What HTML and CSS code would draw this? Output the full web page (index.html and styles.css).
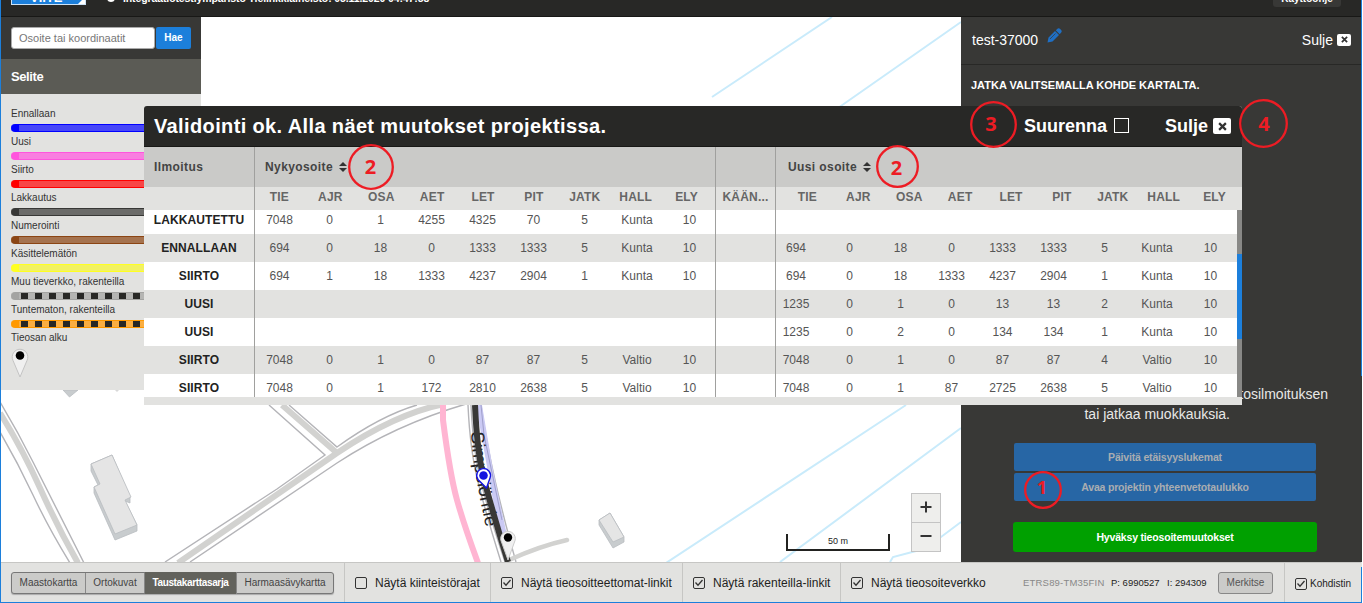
FILE: index.html
```
<!DOCTYPE html>
<html lang="fi">
<head>
<meta charset="utf-8">
<title>Viite</title>
<link rel="stylesheet" href="styles.css">
</head>
<body>
<div class="app">
  <header class="topbar">
    <div class="logo">VIITE<i class="fold"></i></div>
    <span class="dot"></span>
    <span class="env">Integraatiotestiympäristö Tielinkkiaineisto: 05.11.2020 04:47:58</span>
    <span class="guide">Käyttöohje</span>
  </header>

  <main class="main">
    <svg class="map" viewBox="1 17 1360 545" width="1360" height="545" fill="none">
      <g stroke="#c9ebfb" stroke-width="2">
        <path d="M712 97L832 17M818 122L961 22M666 563L906 405M780 562L961 428M890 562L893 557L916 551L941 537L961 522"/>
      </g>
      <g stroke="#b4b4b8" stroke-width="1.4">
        <path d="M0 432Q18 463 33 495T70 563M0 402Q18 432 33 462T84 563"/>
        <path d="M269 405L325 455L277 489L165 562M289 405L337 447Q380 416 417 405M190 562L337 463Q395 425 466 404"/>
        <path d="M468 405Q470 450 478 482T501 562M471 405Q473 450 481 482T505 562M481 405Q490 470 516 562"/>
      </g>
      <g stroke="#d2d2d0" stroke-width="6">
        <path d="M0 413Q22 448 40 488T78 563M178 563L337 453Q395 414 444 404M282 405L337 453"/>
        <path d="M509 560Q540 546 567 540" stroke-width="4.5" stroke-linecap="round"/>
      </g>
      <path d="M443 405L443 420Q450 475 457 500T478 563" stroke="#ffb5d2" stroke-width="6"/>
      <path d="M476 405H482L493 470L508 540L500 540Z" fill="#cbcaf4"/>
      <path d="M481 405L484 435L502 520" stroke="#a0a0cc"/>
      <path id="street" d="M471 432C473 465 479 497 489 540"/>
      <text class="street-name"><textPath href="#street">Simpsiöntie</textPath></text>
      <path d="M475 405Q477 450 483 475T508 562" stroke="#383836" stroke-width="6"/>
      <g stroke="#b9bdc0" stroke-width=".8">
        <path d="M91 464V471L98 485L94 487V493L115 540L137 531V525L125 501L130 503V497L112 455Z" fill="#c8ccce"/>
        <path d="M91 464L112 455L131 497L125 500L137 525L115 534L94 487L100 484Z" fill="#e5e5e5"/>
        <path d="M599 520V525L613 548L624 542V537L610 513Z" fill="#c8ccce"/>
        <path d="M599 520L610 513L624 537L613 542Z" fill="#e5e5e5"/>
        <path d="M63 390L69.500 397L78 390Z" fill="#c8ccce"/>
      </g>
      <path d="M115 390H119L117 392Z" fill="#d8d8d8"/>
      <path d="M486.500 488L478 479.500A6.900 6.900 0 1 1 490 478Z" fill="#fff" stroke="#1414e0" stroke-width="1.4"/>
      <circle cx="483.500" cy="475.500" r="4.300" fill="#1414e0"/>
      <path d="M508 560L501.500 542A7.300 7.300 0 1 1 514.500 542Z" fill="#f0f0f0" stroke="#ccc"/>
      <circle cx="508" cy="537.500" r="4.200" fill="#000"/>
      <path d="M787 534V550H889V534" stroke="#222220" stroke-width="2"/>
      <text class="scale" x="838" y="544">50 m</text>
    </svg>

    <aside class="sidebar">
      <div class="search"><span class="field">Osoite tai koordinaatit</span><span class="go">Hae</span></div>
      <h2 class="legend-title">Selite</h2>
      <div class="legend">
        <p>Ennallaan</p><div class="line blue"></div>
        <p>Uusi</p><div class="line pink"></div>
        <p>Siirto</p><div class="line red"></div>
        <p>Lakkautus</p><div class="line grey"></div>
        <p>Numerointi</p><div class="line brown"></div>
        <p>Käsittelemätön</p><div class="line yellow"></div>
        <p>Muu tieverkko, rakenteilla</p><div class="line silver dashed"></div>
        <p>Tuntematon, rakenteilla</p><div class="line orange dashed"></div>
        <p>Tieosan alku</p>
        <svg class="pin" width="18" height="32" viewBox="0 0 18 32"><path d="M9 29L2 12.500A7.800 7.800 0 1 1 16 12.500Z" fill="#f0f0f0" stroke="#c4c4c4"/><circle cx="9" cy="7.500" r="4.300"/></svg>
      </div>
    </aside>

    <div class="zoomer">
      <span><svg width="12" height="12" viewBox="0 0 12 12"><path d="M6 .5V11.500M.5 6H11.500" stroke="#333" stroke-width="2"/></svg></span>
      <span><svg width="12" height="12" viewBox="0 0 12 12"><path d="M.5 6H11.500" stroke="#333" stroke-width="2"/></svg></span>
    </div>

    <aside class="panel">
      <div class="project">
        <span class="name">test-37000</span>
        <svg class="pencil" width="15" height="15" viewBox="0 0 15 15"><path d="M.5 14.500L1.500 9.500L8 3L12 7L5.500 13.500ZM8.800 2.300L10.800.5Q12 -.3 13.200 1L13.900 1.700Q15.200 3 14.400 4.200L12.700 6.200Z" fill="#1f6fc4"/><path d="M3 11L8.500 5.500" stroke="#383836" stroke-width=".7"/></svg>
        <span class="close">Sulje<b class="x"><svg viewBox="0 0 8 8"><path d="M1 1L7 7M7 1L1 7"/></svg></b></span>
      </div>
      <h3 class="prompt">JATKA VALITSEMALLA KOHDE KARTALTA.</h3>
      <div class="actions">
        <p class="info"><span>tosilmoituksen</span><span class="mid">tai jatkaa muokkauksia.</span></p>
        <span class="btn">Päivitä etäisyyslukemat</span>
        <span class="btn">Avaa projektin yhteenvetotaulukko</span>
        <span class="btn green">Hyväksy tieosoitemuutokset</span>
      </div>
    </aside>
  </main>

  <footer class="footer">
    <div class="maps"><div class="group"><span class="m1">Maastokartta</span><span class="m2">Ortokuvat</span><span class="m3 on">Taustakarttasarja</span><span class="m4">Harmaasävykartta</span></div></div>
    <div class="opt o1"><i class="box"></i>Näytä kiinteistörajat</div>
    <div class="opt o2"><i class="box"><svg viewBox="0 0 10 10"><path d="M1.500 4.500L4 7.200L8.500 2"/></svg></i>Näytä tieosoitteettomat-linkit</div>
    <div class="opt o3"><i class="box"><svg viewBox="0 0 10 10"><path d="M1.500 4.500L4 7.200L8.500 2"/></svg></i>Näytä rakenteilla-linkit</div>
    <div class="opt o4"><i class="box"><svg viewBox="0 0 10 10"><path d="M1.500 4.500L4 7.200L8.500 2"/></svg></i>Näytä tieosoiteverkko</div>
    <div class="coords"><span class="crs">ETRS89-TM35FIN</span><span class="pp">P: 6990527</span><span class="ii">I: 294309</span><span class="mark">Merkitse</span></div>
    <div class="opt o5"><i class="box"><svg viewBox="0 0 10 10"><path d="M1.500 4.500L4 7.200L8.500 2"/></svg></i>Kohdistin</div>
  </footer>
</div>
<i class="edge"></i>

<section class="modal">
  <div class="titlebar">
    <h1>Validointi ok. Alla näet muutokset projektissa.</h1>
    <span class="enlarge">Suurenna<i></i></span>
    <span class="shut">Sulje<b class="x"><svg viewBox="0 0 8 8"><path d="M1 1L7 7M7 1L1 7"/></svg></b></span>
  </div>
  <div class="grid heads">
    <div>Ilmoitus</div>
    <div>Nykyosoite<svg class="sort" viewBox="0 0 8 10"><path d="M4 0L8 4H0ZM4 10L0 6H8Z"/></svg></div>
    <div></div>
    <div>Uusi osoite<svg class="sort" viewBox="0 0 8 10"><path d="M4 0L8 4H0ZM4 10L0 6H8Z"/></svg></div>
  </div>
  <div class="grid cols">
    <div></div>
    <div class="cells"><b>TIE</b><b>AJR</b><b>OSA</b><b>AET</b><b>LET</b><b>PIT</b><b>JATK</b><b>HALL</b><b>ELY</b></div>
    <div class="turn">KÄÄN...</div>
    <div class="cells"><b>TIE</b><b>AJR</b><b>OSA</b><b>AET</b><b>LET</b><b>PIT</b><b>JATK</b><b>HALL</b><b>ELY</b></div>
  </div>
  <div class="body">
    <div class="rows">
      <div class="grid row"><div class="kind">LAKKAUTETTU</div><div class="old"><span>7048</span><span>0</span><span>1</span><span>4255</span><span>4325</span><span>70</span><span>5</span><span>Kunta</span><span>10</span></div><div></div><div class="new"></div></div>
      <div class="grid row"><div class="kind">ENNALLAAN</div><div class="old"><span>694</span><span>0</span><span>18</span><span>0</span><span>1333</span><span>1333</span><span>5</span><span>Kunta</span><span>10</span></div><div></div><div class="new"><span>694</span><span>0</span><span>18</span><span>0</span><span>1333</span><span>1333</span><span>5</span><span>Kunta</span><span>10</span></div></div>
      <div class="grid row"><div class="kind">SIIRTO</div><div class="old"><span>694</span><span>1</span><span>18</span><span>1333</span><span>4237</span><span>2904</span><span>1</span><span>Kunta</span><span>10</span></div><div></div><div class="new"><span>694</span><span>0</span><span>18</span><span>1333</span><span>4237</span><span>2904</span><span>1</span><span>Kunta</span><span>10</span></div></div>
      <div class="grid row"><div class="kind">UUSI</div><div class="old"></div><div></div><div class="new"><span>1235</span><span>0</span><span>1</span><span>0</span><span>13</span><span>13</span><span>2</span><span>Kunta</span><span>10</span></div></div>
      <div class="grid row"><div class="kind">UUSI</div><div class="old"></div><div></div><div class="new"><span>1235</span><span>0</span><span>2</span><span>0</span><span>134</span><span>134</span><span>1</span><span>Kunta</span><span>10</span></div></div>
      <div class="grid row"><div class="kind">SIIRTO</div><div class="old"><span>7048</span><span>0</span><span>1</span><span>0</span><span>87</span><span>87</span><span>5</span><span>Valtio</span><span>10</span></div><div></div><div class="new"><span>7048</span><span>0</span><span>1</span><span>0</span><span>87</span><span>87</span><span>4</span><span>Valtio</span><span>10</span></div></div>
      <div class="grid row"><div class="kind">SIIRTO</div><div class="old"><span>7048</span><span>0</span><span>1</span><span>172</span><span>2810</span><span>2638</span><span>5</span><span>Valtio</span><span>10</span></div><div></div><div class="new"><span>7048</span><span>0</span><span>1</span><span>87</span><span>2725</span><span>2638</span><span>5</span><span>Valtio</span><span>10</span></div></div>
    </div>
    <div class="scroll"><i></i></div>
  </div>
</section>

<svg class="notes" width="1363" height="603" viewBox="0 0 1363 603">
  <g fill="none" stroke="#ed1c24" stroke-width="2.300">
    <circle cx="1043" cy="490" r="17.800"/><circle cx="371" cy="167" r="21.800"/><circle cx="897.500" cy="166.500" r="20.300"/><circle cx="993.500" cy="124.500" r="22.300"/><circle cx="1263.500" cy="123.500" r="23.300"/>
  </g>
  <text class="small" x="1042" y="494">1</text><text x="370.500" y="174">2</text><text x="896.500" y="175">2</text><text x="991" y="131">3</text><text x="1264" y="131">4</text>
</svg>
</body>
</html>
```
FILE: styles.css
```
* { box-sizing: border-box; }
body { margin: 0; width: 1363px; height: 603px; overflow: hidden; background: #fff; font-family: "Liberation Sans", Arial, sans-serif; position: relative; }
h1, h2, h3, p { margin: 0; }
.app { width: 1361px; height: 603px; display: flex; flex-direction: column; border-left: 1px solid #1c7fdb; border-bottom: 1px solid #1c7fdb; }
.edge { position: absolute; left: 1361px; top: 0; width: 1px; height: 603px; background: linear-gradient(#1c7fdb 376px, #383836 376px 562px, #e2e2e0 562px 567px, #1c7fdb 567px); }

.topbar { height: 17px; flex: none; background: #282826; border-bottom: 1px solid #181816; color: #fff; display: flex; align-items: flex-start; padding: 0 20px 0 10px; overflow: hidden; font-weight: bold; }
.logo { position: relative; width: 75px; height: 18px; margin-top: -13px; background: #1c7fdb; border: 1px solid #cde2f6; font-size: 13px; line-height: 19px; padding-left: 18px; overflow: hidden; }
.fold { position: absolute; right: 0; bottom: 0; border: solid transparent; border-width: 0 0 7px 7px; border-bottom-color: #fff; }
.dot { width: 8px; height: 8px; margin: -6px 8px 0 21px; border: 2px solid #fff; border-radius: 50%; }
.env { font-size: 10.5px; letter-spacing: -.11px; line-height: 12px; margin-top: -8px; white-space: nowrap; }
.guide { margin: -14px 0 0 auto; width: 68px; height: 21px; background: #383836; border-radius: 3px; font-size: 10px; line-height: 25px; text-align: center; }

.main { position: relative; height: 545px; flex: none; display: flex; justify-content: space-between; }
.map { position: absolute; inset: 0; }
.street-name { font-size: 18.7px; fill: #222; }
.scale { font-size: 9px; fill: #222; text-anchor: middle; }

.sidebar { position: relative; width: 200px; height: 373px; background: #e2e2e0; }
.search { height: 42px; background: #383836; display: flex; padding: 10px; gap: 1px; }
.field { width: 144px; height: 22px; background: #fff; border: 1px solid #aaa; border-radius: 3px; color: #777; font-size: 11px; line-height: 20px; padding-left: 7px; }
.go { width: 35px; height: 22px; background: #1c7fdb; border-radius: 2px; color: #fff; font-weight: bold; font-size: 10px; line-height: 21px; text-align: center; }
.legend-title { height: 35px; background: #5b5b55; color: #fff; font-size: 13px; letter-spacing: -.4px; line-height: 35px; padding-left: 10px; }
.legend { padding: 12px 10px 0; }
.legend p { height: 18px; font-size: 10px; line-height: 16px; color: #333; }
.line { height: 8px; margin-bottom: 2px; border: 1px solid var(--c); border-width: 1px 0; border-radius: 4px; background: linear-gradient(90deg, var(--c) 8px, var(--l) 8px); position: relative; }
.dashed::after { content: ""; position: absolute; left: 10px; right: 0; top: 0; bottom: 0; background: repeating-linear-gradient(90deg, #282826 0 7px, transparent 7px 14px); }
.blue { --c: #0000ff; --l: #4646f8; }
.pink { --c: #ff55dd; --l: #f87fe0; }
.red { --c: #ff0000; --l: #f84646; }
.grey { --c: #383836; --l: #6b6b69; }
.brown { --c: #8b4513; --l: #a5734f; }
.yellow { --c: #ffff22; --l: #f2f262; }
.silver { --c: #a4a4a2; --l: #b5b5b3; }
.orange { --c: #ff9900; --l: #faae42; }
.pin { display: block; }

.zoomer { position: absolute; left: 910px; top: 476px; width: 30px; height: 59px; background: #eeeeec; border: 1px solid #c4c4c4; display: grid; grid-template-rows: 28px 29px; }
.zoomer span { display: flex; align-items: center; justify-content: center; padding-bottom: 3px; }
.zoomer span + span { border-top: 1px solid #c4c4c4; }

.panel { position: relative; width: 400px; background: #383836; color: #fff; display: flex; flex-direction: column; }
.project { height: 48px; border-bottom: 1px solid #282826; display: flex; align-items: center; padding: 0 10px 2px 11px; font-size: 14px; }
.pencil { margin: -9px 0 0 9px; }
.close { margin-left: auto; display: flex; align-items: center; gap: 4px; }
.x { display: flex; align-items: center; justify-content: center; width: 14px; height: 12px; background: #fff; border-radius: 2px; }
.x svg { width: 7px; height: 7px; stroke: #333; stroke-width: 2; }
.prompt { font-size: 11px; padding: 14px 0 0 10px; }
.actions { margin-top: auto; padding: 0 44px 10px 52px; display: flex; flex-direction: column; }
.info { font-size: 14px; line-height: 20px; color: #e8e8e6; margin: 0 -11px 19px -27px; display: flex; flex-direction: column; align-items: flex-end; white-space: nowrap; }
.info .mid { padding-right: 98px; }
.btn { margin: 0 1px 2px; height: 28px; background: #2766a5; border-radius: 2px; color: #a9adb1; font-weight: bold; font-size: 10.5px; letter-spacing: -.18px; line-height: 28px; text-align: center; }
.green { margin: 19px 0 0; height: 30px; line-height: 30px; background: #00a000; color: #fff; border-radius: 3px; }

.footer { flex: none; height: 40px; background: #e2e2e0; border-top: 1px solid #c6c6c4; display: flex; color: #222; font-size: 12px; white-space: nowrap; }
.footer > div { display: flex; align-items: center; }
.maps { width: 343px; padding-left: 10px; }
.group { display: flex; width: 323px; height: 22px; border: 1px solid #777; border-radius: 3px; background: #cbcbc9; font-size: 10px; line-height: 19px; color: #444; box-shadow: 0 1px 1px #aaa; text-align: center; margin-top: 1px; }
.group span { border-right: 1px solid #888; }
.group span:last-child { border: 0; }
.m1 { width: 74px; }
.m2 { width: 59px; }
.m3 { width: 92px; }
.m4 { flex: 1; }
.group .on { background: #62625c; color: #fff; font-weight: bold; letter-spacing: -.35px; margin: -1px 0; line-height: 21px; }
.opt { border-left: 1px solid #c6c6c4; padding-left: 10px; gap: 8px; }
.box { width: 12px; height: 12px; border: 1px solid #333; border-radius: 2px; }
.box svg { display: block; width: 10px; height: 10px; fill: none; stroke: #333; stroke-width: 1.3; }
.o1 { width: 146px; }
.o2 { width: 192px; }
.o3 { width: 158px; }
.o4 { width: 175px; }
.coords { width: 269px; font-size: 9.5px; padding-left: 8px; }
.crs { color: #888; width: 88px; letter-spacing: .2px; }
.pp { width: 56px; }
.ii { width: 51px; }
.mark { width: 55px; height: 22px; border: 1px solid #888; border-radius: 3px; background: #cbcbc9; color: #555; font-size: 10px; line-height: 20px; text-align: center; }
.o5 { width: 77px; font-size: 10px; gap: 3px; padding-top: 2px; }

.modal { position: absolute; left: 144px; top: 106px; width: 1098px; height: 299px; background: #e2e2e0; border-radius: 3px 3px 0 0; overflow: hidden; }
.titlebar { height: 41px; background: #282826; border-bottom: 1px solid #181816; color: #fff; display: flex; align-items: center; padding-left: 10px; font-weight: bold; font-size: 18px; }
.titlebar h1 { font-size: 20px; width: 870px; letter-spacing: .37px; }
.enlarge { display: flex; align-items: center; gap: 7px; width: 141px; }
.enlarge i { width: 15px; height: 15px; border: 1px solid #fff; margin-top: -2px; }
.shut { display: flex; align-items: center; gap: 5px; }
.titlebar .x { width: 18px; height: 16px; }
.titlebar .x svg { width: 9px; height: 9px; }
.grid { display: grid; grid-template-columns: 110px 461px 60px 467px; }
.grid > div + div { border-left: 1px solid #a0a09e; }
.heads { height: 40px; background: #cacac8; color: #444; font-weight: bold; font-size: 12px; line-height: 41px; letter-spacing: .4px; }
.heads > div { padding-left: 10px; height: 40px; }
.heads > div:last-child { padding-left: 12px; }
.sort { width: 8px; height: 10px; fill: #333; margin-left: 6px; vertical-align: -1px; }
.cols { height: 23px; color: #666; font-size: 12px; line-height: 20px; letter-spacing: .2px; }
.cols > div { height: 23px; }
.cells { display: grid; grid-template-columns: repeat(9, 50.900px); text-align: center; margin-right: 0; }
.cells b { position: relative; left: -1px; }
.cols > .cells:last-child { padding-left: 7px; }
.turn { text-align: center; font-weight: bold; }
.body { height: 187px; overflow: hidden; display: flex; }
.rows { width: 1093px; height: 191px; margin-top: -4px; }
.row { height: 28px; font-size: 12px; line-height: 28px; color: #555; background: #e2e2e0; }
.row:nth-child(odd) { background: #fff; }
.rows .grid { grid-template-columns: 110px 461px 60px 462px; }
.kind { text-align: center; font-weight: bold; color: #222; letter-spacing: .1px; }
.old, .new { display: grid; text-align: center; }
.old { grid-template-columns: 49px repeat(6, 51px) 54px 51px; }
.new { grid-template-columns: 48px repeat(6, 51px) 54px 53px; }
.new span:first-child { padding-right: 8px; }
.scroll { width: 5px; background: #888886; padding-top: 44px; }
.scroll i { display: block; height: 85px; background: #1c7fdb; }

.notes { position: absolute; left: 0; top: 0; }
.notes text { font: bold 20px "Open Sans", sans-serif; fill: #ed1c24; text-anchor: middle; }
.notes .small { font-size: 18px; }
```
